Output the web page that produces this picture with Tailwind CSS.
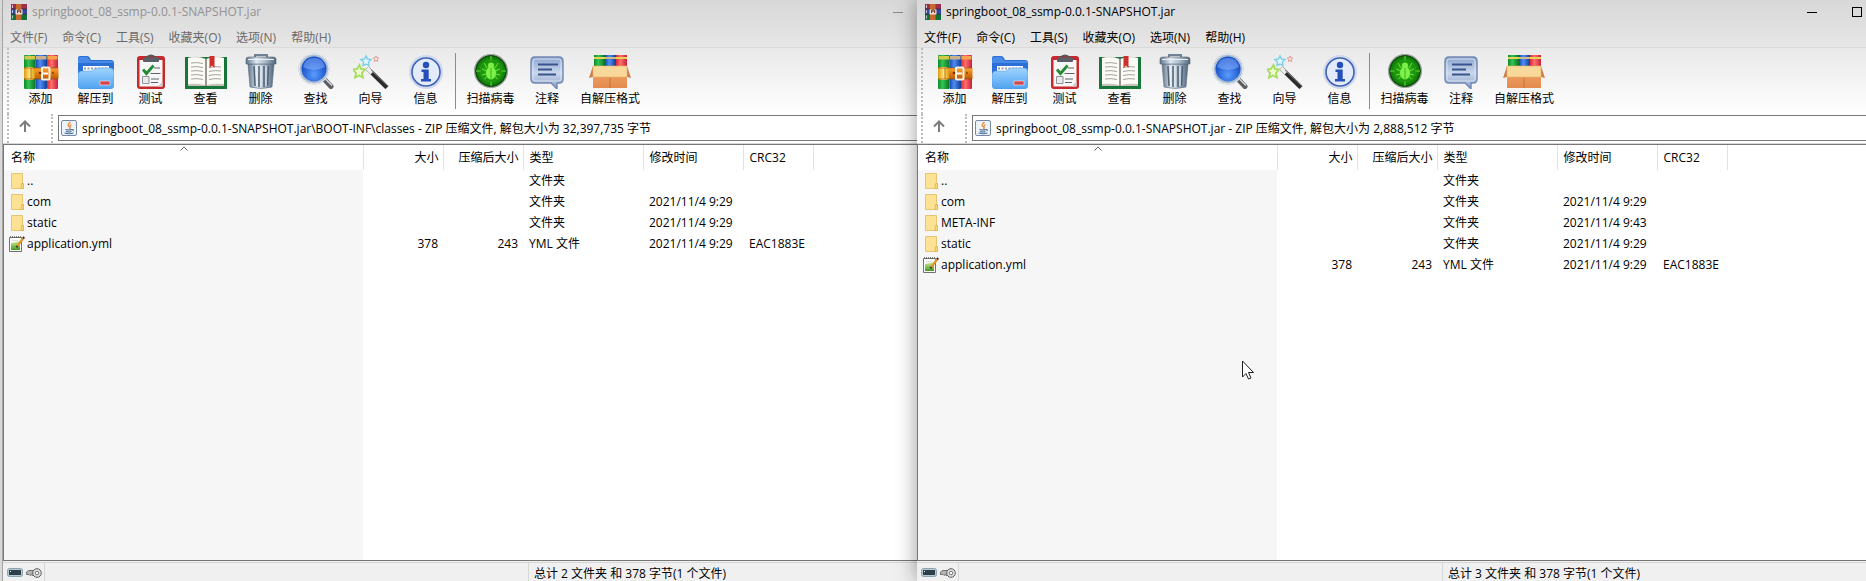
<!DOCTYPE html>
<html lang="zh-CN">
<head>
<meta charset="utf-8">
<title>WinRAR</title>
<script src="https://cdn.jsdelivr.net/npm/@tailwindcss/browser@4"></script>
</head>
<body class="h-screen overflow-hidden bg-[#cfcfcf] font-['Open_Sans','Noto_Sans_CJK_SC',sans-serif] text-xs text-black">

<svg class="absolute size-0" aria-hidden="true">
  <defs>
    <linearGradient id="gGreen"><stop offset="0" stop-color="#0c8a2c"/><stop offset=".4" stop-color="#35c254"/><stop offset="1" stop-color="#067322"/></linearGradient>
    <linearGradient id="gBlue"><stop offset="0" stop-color="#1546b0"/><stop offset=".4" stop-color="#4f8df2"/><stop offset="1" stop-color="#123b96"/></linearGradient>
    <linearGradient id="gRed"><stop offset="0" stop-color="#d8282c"/><stop offset=".4" stop-color="#ff6f6c"/><stop offset="1" stop-color="#c8203c"/></linearGradient>
    <linearGradient id="gBelt" x2="0" y2="1"><stop offset="0" stop-color="#f9a63a"/><stop offset=".5" stop-color="#e07a12"/><stop offset="1" stop-color="#b95c08"/></linearGradient>
    <linearGradient id="gGold"><stop offset="0" stop-color="#e09a10"/><stop offset=".5" stop-color="#ffe27a"/><stop offset="1" stop-color="#e09a10"/></linearGradient>
    <linearGradient id="gFold" x2="0" y2="1"><stop offset="0" stop-color="#9fd4ff"/><stop offset="1" stop-color="#4ea2f0"/></linearGradient>
    <linearGradient id="gSteel"><stop offset="0" stop-color="#5f7388"/><stop offset=".35" stop-color="#dfe8f0"/><stop offset=".65" stop-color="#a9b9c9"/><stop offset="1" stop-color="#52657a"/></linearGradient>
    <radialGradient id="gLens" cx=".5" cy=".7"><stop offset="0" stop-color="#5b9cff"/><stop offset="1" stop-color="#1650c8"/></radialGradient>
    <radialGradient id="gBug"><stop offset="0" stop-color="#35c010"/><stop offset="1" stop-color="#0c7a08"/></radialGradient>
    <linearGradient id="gNote" x2="0" y2="1"><stop offset="0" stop-color="#8ba4cf"/><stop offset=".5" stop-color="#c9d6ec"/><stop offset="1" stop-color="#8ba0c8"/></linearGradient>
    <linearGradient id="gBox" x2="0" y2="1"><stop offset="0" stop-color="#f0a468"/><stop offset="1" stop-color="#e58c50"/></linearGradient>
    <linearGradient id="gYml" x2="0" y2="1"><stop offset="0" stop-color="#d9ee9a"/><stop offset="1" stop-color="#3d9a1c"/></linearGradient>
  </defs>
  <symbol id="app" viewBox="0 0 16 16">
    <path fill="#9c2f4e" d="M0 0h16v5H0z"/><path fill="#3346a0" d="M0 5h16v5H0z"/><path fill="#14713a" d="M0 10h16v6H0z"/>
    <path stroke="#2a2030" stroke-width=".6" d="M0 5h16M0 10.3h16"/><path stroke="#e8e0e8" stroke-width=".8" d="M1.5 1v3M1.5 6v3M1.5 11.5v3"/>
    <path fill="#c8692c" d="M5 0h5.500v16H5z"/><path fill="#e6ded4" d="M4.500 5.500h7v5h-7z"/><path fill="#8d3c22" d="M6 6h1.200v3H6zM9 6h1.200v3H9z"/><path fill="#3a241c" d="M7.500 5h1v3h-1z"/>
  </symbol>
  <symbol id="add" viewBox="0 0 36 36">
    <rect x="1" y="2" width="11.500" height="34" rx="1" fill="url(#gGreen)"/><rect x="12.500" y="2" width="11.500" height="34" rx="1" fill="url(#gBlue)"/><rect x="24" y="2" width="11" height="34" rx="1" fill="url(#gRed)"/>
    <path fill="#d2c94a" d="M1.500 3h10.500v3.500H1.500z"/><path fill="#c9b08a" d="M13 3h10.500v3.500H13z"/><path fill="#f6a34c" d="M24.500 3H34.500v3.500H24.500z"/>
    <rect x="1" y="15" width="34.500" height="11" fill="url(#gBelt)"/><rect x="1" y="14" width="11" height="13" rx="3" fill="url(#gGold)"/>
    <path fill="none" stroke="#8d4a08" stroke-width=".6" d="M1 15h34M1 26h34M8 15v11"/>
    <rect x="19" y="14.500" width="7.500" height="12" rx="1" fill="none" stroke="#fff3e0" stroke-width="2"/><circle cx="17" cy="20" r="1.300" fill="#6b2f04"/><path stroke="#fff" stroke-width="2" d="M20 20.500h5"/><circle cx="30" cy="20" r="1" fill="#8a4206"/>
  </symbol>
  <symbol id="extract" viewBox="0 0 36 36">
    <path fill="#2b6fd8" d="M0 5q0-2 2-2h7q2 0 3 2l1 2h20q3 0 3 3v22H0z"/><path fill="#5b9cf0" d="M0 8q0-3 2-4h7l4 4h20q3 0 3 2H0z" opacity=".6"/>
    <path fill="#fff" d="M5 13h26v8H5z"/><path stroke="#8a9ab2" stroke-width="2" stroke-dasharray="2 1.500" d="M6 15.500h24"/>
    <path fill="url(#gFold)" stroke="#4a93e0" stroke-width=".5" d="M0 22q0-4 4-4h10l3-2q2-1 4-1h11q4 0 4 4v13q0 4-4 4H4q-4 0-4-4z"/><rect x="22" y="28" width="10" height="4" fill="#d8454a" stroke="#fff" stroke-width=".5"/>
  </symbol>
  <symbol id="test" viewBox="0 0 36 36">
    <rect x="4" y="3" width="28" height="33" rx="3" fill="#c7282d"/><rect x="6.500" y="7" width="23" height="26.500" fill="#f6f7f6"/><path fill="#caced2" d="M25 33.500l4.500-5v5z"/>
    <path fill="none" stroke="#555" stroke-width="2" d="M13 5q5-5 10 0"/><rect x="10" y="4.500" width="16" height="4.500" rx="1" fill="#5b5f66"/>
    <path fill="none" stroke="#238a35" stroke-width="2.800" d="M10 16.500l3.500 4 7-8"/><path stroke="#5d6468" d="M17.500 20.500h10M21 15h6M18 26h8M18 29.500h7"/><path fill="#e8eaea" stroke="#8d9396" d="M9.500 23.500h6.500v7H9.500z"/>
  </symbol>
  <symbol id="view" viewBox="0 0 44 36">
    <path fill="#18763a" d="M1 4h42v32H1z"/><path fill="#c6c3b8" d="M4 5q9-3 18 1 9-4 18-1v28H4z"/><path fill="#fbfaf4" d="M4 5q10-2 17 1v26q-8-2-17-1zM40 5q-10-2-17 1v26q8-2 17-1z"/>
    <path fill="none" stroke="#a4a4a0" d="M7 10q6-1 12 .5M7 14q6-1 12 .5M7 18q6-1 12 .5M7 22q6-1 12 .5M7 26q6-1 12 .5M37 14q-6-1-12 .5M37 18q-6-1-12 .5M37 22q-6-1-12 .5M37 26q-6-1-12 .5"/><path stroke="#6f6f68" d="M22 6v27"/><path fill="#cc2f2c" d="M25.500 3h5v12l-2.500-2.500L25.500 15z"/>
  </symbol>
  <symbol id="delete" viewBox="0 0 36 36">
    <path fill="none" stroke="#6f8294" stroke-width="2" d="M12 4V2h12v2"/><path fill="url(#gSteel)" stroke="#5b6c7e" stroke-width=".6" d="M5 11h26l-2 23q-11 3-22 0z"/>
    <path stroke="#4d6074" stroke-width="1.500" d="M11 13l1 20M16 13v21M21 13v21M25.500 13l-1 20"/><path stroke="#eef3f8" d="M13 13l.8 20M18 13v21M23 13v20"/><path fill="url(#gSteel)" stroke="#526579" stroke-width=".6" d="M3 6q0-2 3-2h24q3 0 3 2v5H3z"/><path stroke="#e8eef4" d="M5 6.500h26"/>
  </symbol>
  <symbol id="find" viewBox="0 0 36 36">
    <path stroke="#5e5e62" stroke-width="5" stroke-linecap="round" d="M26 26l7 7.500"/><path stroke="#d9dade" stroke-width="1.500" d="M26 24.500l8 8"/><circle cx="16" cy="16" r="14" fill="url(#gLens)" stroke="#aebed2" stroke-width="3"/><circle cx="16" cy="16" r="15" fill="none" stroke="#e8eef5"/><path fill="#8fb8ff" opacity=".5" d="M5 14Q7 5 16 5t11 9q-11 6-22 0z"/>
  </symbol>
  <symbol id="wizard" viewBox="0 0 36 36">
    <path stroke="#2c2c2e" stroke-width="4.500" d="M14 15l20 19.500"/><path stroke="#ececec" stroke-width="4" d="M14 15l5 5"/><path stroke="#8d8d90" stroke-width="1" d="M18 17l17 16"/>
    <path fill="#effad0" stroke="#a4dc5c" stroke-width="1.800" d="M6.500 12l1.500 4 4 .5-3 3.500 1 4.500-4-2-4 2 1-4.500L0 16.500l4-.5z"/><path fill="#e4f8fc" stroke="#7ed0e8" stroke-width="1.500" d="M13 3l1.500 3 3.500.5-2.500 2.500.5 3.500L13 11l-3 1.500.5-3.500L8 6.500l3.500-.5z"/><path fill="#fde7e4" stroke="#e59a94" d="M23 3l.8 1.800 2 .3-1.500 1.400.4 2-1.700-1-1.700 1 .4-2-1.500-1.400 2-.3z"/>
  </symbol>
  <symbol id="info" viewBox="0 0 36 36">
    <circle cx="18" cy="19" r="17" fill="#cfd9ec"/><circle cx="18" cy="19" r="14" fill="#e3eafa" stroke="#3f62b8" stroke-width="1.600"/><circle cx="18" cy="12" r="3.200" fill="#2450b8"/><path fill="#2450b8" d="M13.500 16.500h7.200V26H23v2.500H13V26h2.500v-7h-2z"/>
  </symbol>
  <symbol id="virus" viewBox="0 0 36 36">
    <circle cx="18" cy="18" r="17" fill="#8a918c"/><circle cx="18" cy="18" r="16.200" fill="#dfe5df"/><circle cx="18" cy="18" r="15.200" fill="url(#gBug)" stroke="#124a12" stroke-width="1.500"/>
    <path fill="none" stroke="#6ae040" d="M18 3v5M18 28v5M3 18h5M28 18h5M11 10l3 5M25 10l-3 5M9 16l5 2M27 16l-5 2M9 22l5-1M27 22l-5-1M11 27l3-4M25 27l-3-4"/><circle cx="18" cy="18" r="11" fill="none" stroke="#2b9a18"/><ellipse cx="18" cy="20" rx="5" ry="6.500" fill="#7df04a"/><circle cx="18" cy="12.500" r="3" fill="#7df04a"/><path stroke="#3bb420" d="M18 15v11"/>
  </symbol>
  <symbol id="comment" viewBox="0 0 36 36">
    <path fill="url(#gNote)" stroke="#7188b4" stroke-width="1.400" d="M6 4h24q4 0 4 4v18q0 4-4 4h-2v6l-6-6H6q-4 0-4-4V8q0-4 4-4z"/><rect x="4" y="6" width="28" height="22" rx="2.500" fill="none" stroke="#e4ecf8" opacity=".8"/><path stroke="#38548c" stroke-width="2" d="M9 11.500h20M9 16.500h14M9 21.500h18"/>
  </symbol>
  <symbol id="sfx" viewBox="0 0 42 36">
    <path fill="url(#gGreen)" d="M5 2h11v15H5z"/><path fill="url(#gBlue)" d="M16 2h11v15H16z"/><path fill="url(#gRed)" d="M27 2h11v15H27z"/><path stroke="#e6d45a" stroke-width="2" d="M5 5h11M27 5h11"/><path stroke="#cdbb8a" stroke-width="2" d="M16 5h11"/>
    <path fill="url(#gBox)" d="M4 13h34v22H4z"/><path stroke="#c87038" d="M21 25v10"/><path fill="#c98048" d="M4 13L0 25l4-1zM38 13l4 12-4-1z"/><path fill="#f9d99a" stroke="#e8b468" stroke-width=".6" d="M4 13h34v11H4z"/>
  </symbol>
  <symbol id="java" viewBox="0 0 16 16">
    <rect x=".5" y=".5" width="15" height="15" rx="1.500" fill="#eef3f9" stroke="#7288a4"/><path fill="none" stroke="#e8842c" stroke-width="1.200" d="M9.500 2q-4 3-1.500 4.500T8 9M10.500 4.500Q8 6 9.500 7.500"/><path fill="none" stroke="#4a6d9c" stroke-width="1.100" d="M4.500 9.500q3 1 6.500 0M5 11.500q3 1 5.500 0M3.500 13q4.500 1.500 9 0M11 9.500q2 0 1 1.500"/>
  </symbol>
  <symbol id="folder" viewBox="0 0 16 16">
    <path fill="#fde294" stroke="#e3bd5c" stroke-width=".8" d="M2.500.5h11v10h1v5h-12z"/><path fill="#fbd871" stroke="#dcb24c" stroke-width=".8" d="M12.500 10.500h2v5h-2.500z"/>
  </symbol>
  <symbol id="yml" viewBox="0 0 16 16">
    <path fill="#fdfdfd" stroke="#6e7468" d="M.5 1.500h12v14H.5z"/><path stroke="#5c5c5c" stroke-width="1.500" stroke-dasharray="1 1" d="M1 1h12"/><path fill="url(#gYml)" d="M2 7l9-2v9H2z"/><path stroke="#ddd" d="M3 4.500h6"/><path stroke="#e2942c" stroke-width="2.200" d="M8 10.500l6-8"/><path stroke="#4b3220" stroke-width="2.200" d="M14 2.500L15.200 1M8.300 10l-.8 1.300"/>
  </symbol>
  <symbol id="drive" viewBox="0 0 16 9">
    <rect x=".5" y=".5" width="15" height="8" rx="2" fill="#b7c9d3" stroke="#8da2ae"/><rect x="2" y="2" width="12" height="5" fill="#2e3f49"/><path fill="#dff" d="M3 3h1v1H3z"/>
  </symbol>
  <symbol id="key" viewBox="0 0 16 10">
    <path fill="#b4b4b4" stroke="#5a5a5a" stroke-width=".8" d="M.5 4l2-1.500H8v4L6.500 8 5.500 6.500 4 7.500 3 6.500H.5z"/><circle cx="11" cy="5" r="4.300" fill="#e3e3e3" stroke="#5a5a5a"/><circle cx="11" cy="5" r="1.800" fill="#fff" stroke="#777"/>
  </symbol>
  <symbol id="up" viewBox="0 0 12 12"><path fill="none" stroke="#7c7c7c" stroke-width="2" d="M6 12V2M1 6.500L6 1.500l5 5"/></symbol>
</svg>

<main class="grid h-full grid-cols-[3px_914fr_949fr] grid-rows-[minmax(0,1fr)]">
  <div class="border-r border-[#a4a4a4] bg-[#d9d9d9]"></div>

  <section class="flex min-w-0 flex-col overflow-hidden bg-white" aria-label="classes">
    <header class="h-[47px] shrink-0 bg-linear-to-b from-[#d8d8d8] to-[#e6e6e6]">
      <div class="flex h-6 items-center pl-2 text-[#929292]">
        <svg class="size-4"><use href="#app"/></svg>
        <h1 class="ml-[5px] leading-5">springboot_08_ssmp-0.0.1-SNAPSHOT.jar</h1>
        <button class="-mr-[3px] ml-auto flex h-6 w-[45px] items-center justify-center" aria-label="最小化"><span class="h-px w-[10px] bg-[#8a8a8a]"></span></button>
      </div>
      <nav class="flex h-[23px] items-center gap-[15px] pl-[7px] pt-1 leading-4 text-[#6a6a6a]">
        <button>文件(F)</button><button>命令(C)</button><button>工具(S)</button><button>收藏夹(O)</button><button>选项(N)</button><button>帮助(H)</button>
      </nav>
    </header>
    <div class="flex h-[67px] shrink-0 border-t border-[#dadada] bg-linear-to-b from-[#e9e9e9] to-white pl-1">
      <div class="mr-1 w-0 border-l-2 border-dotted border-[#bdbdbd]"></div>
      <div class="flex h-[62px] pt-[5px] leading-5">
        <button class="flex w-[55px] flex-col items-center"><svg class="size-9"><use href="#add"/></svg>添加</button>
        <button class="flex w-[55px] flex-col items-center"><svg class="size-9"><use href="#extract"/></svg>解压到</button>
        <button class="flex w-[55px] flex-col items-center"><svg class="size-9"><use href="#test"/></svg>测试</button>
        <button class="flex w-[55px] flex-col items-center"><svg class="h-9 w-11"><use href="#view"/></svg>查看</button>
        <button class="flex w-[55px] flex-col items-center"><svg class="size-9"><use href="#delete"/></svg>删除</button>
        <button class="flex w-[55px] flex-col items-center"><svg class="size-9"><use href="#find"/></svg>查找</button>
        <button class="flex w-[55px] flex-col items-center"><svg class="size-9"><use href="#wizard"/></svg>向导</button>
        <button class="flex w-[55px] flex-col items-center"><svg class="size-9"><use href="#info"/></svg>信息</button>
        <span class="mx-[2px] h-14 w-px bg-[#8c8c8c]"></span>
        <button class="flex w-[65px] flex-col items-center"><svg class="size-9"><use href="#virus"/></svg>扫描病毒</button>
        <button class="flex w-12 flex-col items-center"><svg class="size-9"><use href="#comment"/></svg>注释</button>
        <button class="flex w-[78px] flex-col items-center"><svg class="h-9 w-[42px]"><use href="#sfx"/></svg>自解压格式</button>
      </div>
    </div>
    <div class="flex h-[30px] shrink-0 items-start border-b border-[#d8d8d8] bg-white pl-1">
      <div class="h-full border-l-2 border-dotted border-[#bdbdbd]"></div>
      <button class="flex h-6 w-8 items-center justify-center" aria-label="上一级"><svg class="size-3"><use href="#up"/></svg></button>
      <div class="ml-[10px] h-full border-l-2 border-dotted border-[#bdbdbd]"></div>
      <label class="ml-[5px] mt-px flex h-[26px] flex-1 items-center border border-r-0 border-[#777] bg-white pl-[2px]">
        <svg class="size-4"><use href="#java"/></svg>
        <input aria-label="地址" class="ml-[5px] flex-1 pt-px outline-none" value="springboot_08_ssmp-0.0.1-SNAPSHOT.jar\BOOT-INF\classes - ZIP 压缩文件, 解包大小为 32,397,735 字节">
      </label>
    </div>
    <div class="min-h-0 flex-1 overflow-hidden border-y border-l border-[#777] bg-[linear-gradient(#f6f6f6,#f6f6f6)] bg-[length:359px_100%] bg-no-repeat">
      <table class="w-full table-fixed leading-4">
        <colgroup><col class="w-[359px]"><col class="w-20"><col class="w-20"><col class="w-[120px]"><col class="w-[100px]"><col class="w-[70px]"><col></colgroup>
        <thead>
          <tr class="h-[25px] bg-white text-left">
            <th class="relative border-r border-[#e2e2e2] pl-[7px] font-normal">名称<svg class="absolute left-[176px] top-px h-[5px] w-2" viewBox="0 0 8 5"><path fill="none" stroke="#666" d="M.5 4.500L4 1l3.500 3.500"/></svg></th>
            <th class="border-r border-[#e2e2e2] pr-1 text-right font-normal">大小</th><th class="border-r border-[#e2e2e2] pr-1 text-right font-normal">压缩后大小</th><th class="border-r border-[#e2e2e2] pl-[6px] font-normal">类型</th><th class="border-r border-[#e2e2e2] pl-[6px] font-normal">修改时间</th><th class="border-r border-[#e2e2e2] pl-[6px] font-normal">CRC32</th><td></td>
          </tr>
        </thead>
        <tbody>
          <tr class="h-[21px]"><td><span class="flex items-center gap-[2px] pl-[5px]"><svg class="size-4"><use href="#folder"/></svg>..</span></td><td></td><td></td><td class="pl-[6px]">文件夹</td><td></td><td></td><td></td></tr>
          <tr class="h-[21px]"><td><span class="flex items-center gap-[2px] pl-[5px]"><svg class="size-4"><use href="#folder"/></svg>com</span></td><td></td><td></td><td class="pl-[6px]">文件夹</td><td class="pl-[6px]">2021/11/4 9:29</td><td></td><td></td></tr>
          <tr class="h-[21px]"><td><span class="flex items-center gap-[2px] pl-[5px]"><svg class="size-4"><use href="#folder"/></svg>static</span></td><td></td><td></td><td class="pl-[6px]">文件夹</td><td class="pl-[6px]">2021/11/4 9:29</td><td></td><td></td></tr>
          <tr class="h-[21px]"><td><span class="flex items-center gap-[2px] pl-[5px]"><svg class="size-4"><use href="#yml"/></svg>application.yml</span></td><td class="pr-[5px] text-right">378</td><td class="pr-[5px] text-right">243</td><td class="pl-[6px]">YML 文件</td><td class="pl-[6px]">2021/11/4 9:29</td><td class="pl-[6px]">EAC1883E</td><td></td></tr>
        </tbody>
      </table>
    </div>
    <footer class="flex h-5 shrink-0 bg-[#f0f0f0] pt-px leading-4">
      <div class="flex w-[525px] border-t border-[#d7d7d7]">
        <div class="flex w-[42px] items-center gap-[3px] border-r border-[#d7d7d7] pl-1 pt-px"><svg class="h-[9px] w-4"><use href="#drive"/></svg><svg class="h-[10px] w-4"><use href="#key"/></svg></div>
      </div>
      <p class="flex flex-1 items-center border-l border-t border-[#d7d7d7] pl-[5px] pt-1">总计 2 文件夹 和 378 字节(1 个文件)</p>
    </footer>
  </section>

  <section class="relative flex min-w-0 flex-col bg-white shadow-[0_0_20px_rgba(0,0,0,0.4)]" aria-label="springboot_08_ssmp-0.0.1-SNAPSHOT.jar">
    <header class="h-[47px] shrink-0 overflow-hidden bg-linear-to-b from-[#d8d8d8] to-[#e6e6e6]">
      <div class="flex h-6 items-center pl-2">
        <svg class="size-4"><use href="#app"/></svg>
        <h1 class="ml-[5px] leading-5">springboot_08_ssmp-0.0.1-SNAPSHOT.jar</h1>
        <div class="-mr-[13px] ml-auto flex">
          <button class="flex h-6 w-[45px] items-center justify-center" aria-label="最小化"><span class="h-px w-[10px] bg-black"></span></button>
          <button class="flex h-6 w-[45px] items-center justify-center" aria-label="最大化"><span class="size-[10px] border border-black"></span></button>
        </div>
      </div>
      <nav class="flex h-[23px] items-center gap-[15px] pl-[7px] pt-1 leading-4">
        <button>文件(F)</button><button>命令(C)</button><button>工具(S)</button><button>收藏夹(O)</button><button>选项(N)</button><button>帮助(H)</button>
      </nav>
    </header>
    <div class="flex h-[67px] shrink-0 border-t border-[#dadada] bg-linear-to-b from-[#e9e9e9] to-white pl-1">
      <div class="mr-1 w-0 border-l-2 border-dotted border-[#bdbdbd]"></div>
      <div class="flex h-[62px] pt-[5px] leading-5">
        <button class="flex w-[55px] flex-col items-center"><svg class="size-9"><use href="#add"/></svg>添加</button>
        <button class="flex w-[55px] flex-col items-center"><svg class="size-9"><use href="#extract"/></svg>解压到</button>
        <button class="flex w-[55px] flex-col items-center"><svg class="size-9"><use href="#test"/></svg>测试</button>
        <button class="flex w-[55px] flex-col items-center"><svg class="h-9 w-11"><use href="#view"/></svg>查看</button>
        <button class="flex w-[55px] flex-col items-center"><svg class="size-9"><use href="#delete"/></svg>删除</button>
        <button class="flex w-[55px] flex-col items-center"><svg class="size-9"><use href="#find"/></svg>查找</button>
        <button class="flex w-[55px] flex-col items-center"><svg class="size-9"><use href="#wizard"/></svg>向导</button>
        <button class="flex w-[55px] flex-col items-center"><svg class="size-9"><use href="#info"/></svg>信息</button>
        <span class="mx-[2px] h-14 w-px bg-[#8c8c8c]"></span>
        <button class="flex w-[65px] flex-col items-center"><svg class="size-9"><use href="#virus"/></svg>扫描病毒</button>
        <button class="flex w-12 flex-col items-center"><svg class="size-9"><use href="#comment"/></svg>注释</button>
        <button class="flex w-[78px] flex-col items-center"><svg class="h-9 w-[42px]"><use href="#sfx"/></svg>自解压格式</button>
      </div>
    </div>
    <div class="flex h-[30px] shrink-0 items-start border-b border-[#d8d8d8] bg-white pl-1">
      <div class="h-full border-l-2 border-dotted border-[#bdbdbd]"></div>
      <button class="flex h-6 w-8 items-center justify-center" aria-label="上一级"><svg class="size-3"><use href="#up"/></svg></button>
      <div class="ml-[10px] h-full border-l-2 border-dotted border-[#bdbdbd]"></div>
      <label class="ml-[5px] mt-px flex h-[26px] flex-1 items-center border border-r-0 border-[#777] bg-white pl-[2px]">
        <svg class="size-4"><use href="#java"/></svg>
        <input aria-label="地址" class="ml-[5px] flex-1 pt-px outline-none" value="springboot_08_ssmp-0.0.1-SNAPSHOT.jar - ZIP 压缩文件, 解包大小为 2,888,512 字节">
      </label>
    </div>
    <div class="min-h-0 flex-1 overflow-hidden border-y border-l border-[#777] bg-[linear-gradient(#f6f6f6,#f6f6f6)] bg-[length:359px_100%] bg-no-repeat">
      <table class="w-full table-fixed leading-4">
        <colgroup><col class="w-[359px]"><col class="w-20"><col class="w-20"><col class="w-[120px]"><col class="w-[100px]"><col class="w-[70px]"><col></colgroup>
        <thead>
          <tr class="h-[25px] bg-white text-left">
            <th class="relative border-r border-[#e2e2e2] pl-[7px] font-normal">名称<svg class="absolute left-[176px] top-px h-[5px] w-2" viewBox="0 0 8 5"><path fill="none" stroke="#666" d="M.5 4.500L4 1l3.500 3.500"/></svg></th>
            <th class="border-r border-[#e2e2e2] pr-1 text-right font-normal">大小</th><th class="border-r border-[#e2e2e2] pr-1 text-right font-normal">压缩后大小</th><th class="border-r border-[#e2e2e2] pl-[6px] font-normal">类型</th><th class="border-r border-[#e2e2e2] pl-[6px] font-normal">修改时间</th><th class="border-r border-[#e2e2e2] pl-[6px] font-normal">CRC32</th><td></td>
          </tr>
        </thead>
        <tbody>
          <tr class="h-[21px]"><td><span class="flex items-center gap-[2px] pl-[5px]"><svg class="size-4"><use href="#folder"/></svg>..</span></td><td></td><td></td><td class="pl-[6px]">文件夹</td><td></td><td></td><td></td></tr>
          <tr class="h-[21px]"><td><span class="flex items-center gap-[2px] pl-[5px]"><svg class="size-4"><use href="#folder"/></svg>com</span></td><td></td><td></td><td class="pl-[6px]">文件夹</td><td class="pl-[6px]">2021/11/4 9:29</td><td></td><td></td></tr>
          <tr class="h-[21px]"><td><span class="flex items-center gap-[2px] pl-[5px]"><svg class="size-4"><use href="#folder"/></svg>META-INF</span></td><td></td><td></td><td class="pl-[6px]">文件夹</td><td class="pl-[6px]">2021/11/4 9:43</td><td></td><td></td></tr>
          <tr class="h-[21px]"><td><span class="flex items-center gap-[2px] pl-[5px]"><svg class="size-4"><use href="#folder"/></svg>static</span></td><td></td><td></td><td class="pl-[6px]">文件夹</td><td class="pl-[6px]">2021/11/4 9:29</td><td></td><td></td></tr>
          <tr class="h-[21px]"><td><span class="flex items-center gap-[2px] pl-[5px]"><svg class="size-4"><use href="#yml"/></svg>application.yml</span></td><td class="pr-[5px] text-right">378</td><td class="pr-[5px] text-right">243</td><td class="pl-[6px]">YML 文件</td><td class="pl-[6px]">2021/11/4 9:29</td><td class="pl-[6px]">EAC1883E</td><td></td></tr>
        </tbody>
      </table>
    </div>
    <footer class="flex h-5 shrink-0 bg-[#f0f0f0] pt-px leading-4">
      <div class="flex w-[525px] border-t border-[#d7d7d7]">
        <div class="flex w-[42px] items-center gap-[3px] border-r border-[#d7d7d7] pl-1 pt-px"><svg class="h-[9px] w-4"><use href="#drive"/></svg><svg class="h-[10px] w-4"><use href="#key"/></svg></div>
      </div>
      <p class="flex flex-1 items-center border-l border-t border-[#d7d7d7] pl-[5px] pt-1">总计 3 文件夹 和 378 字节(1 个文件)</p>
    </footer>
    <svg class="absolute left-[325px] top-[360px] h-5 w-3" viewBox="0 0 12 20" aria-hidden="true"><path fill="#fff" stroke="#222" d="M.5 1v16l3.500-3.500 2.500 5.500 2.500-1-2.500-5.500h5z"/></svg>
  </section>
</main>
</body>
</html>
